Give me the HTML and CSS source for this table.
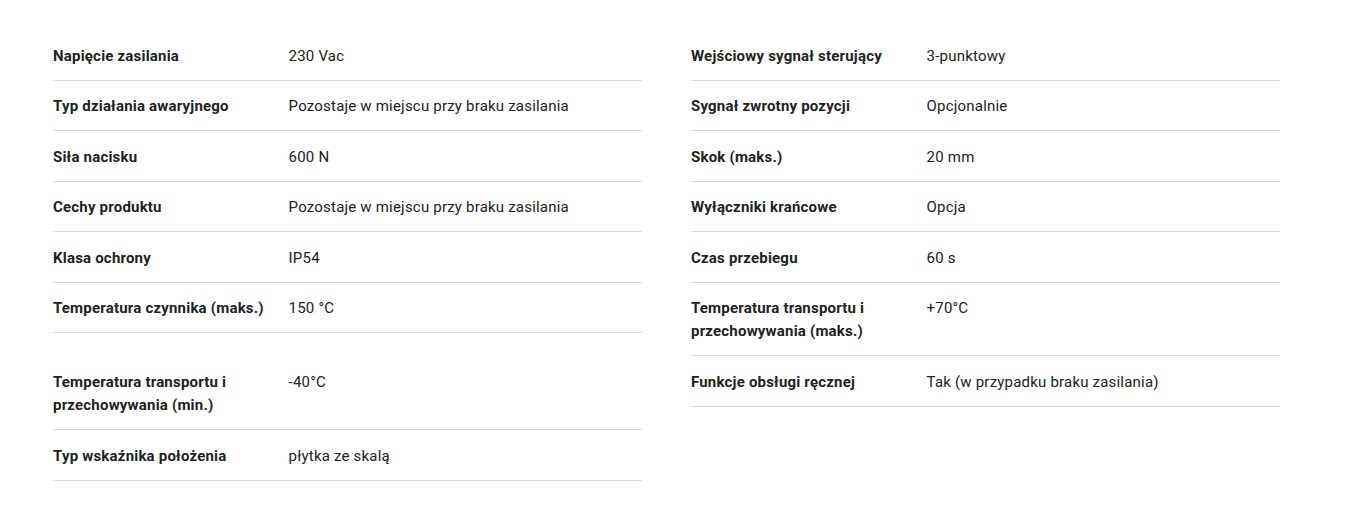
FILE: index.html
```html
<!DOCTYPE html>
<html lang="pl">
<head>
<meta charset="utf-8">
<link rel="stylesheet" href="styles.css">
</head>
<body>
<div class="specs">
  <div class="col">
    <div class="row"><div class="label">Napięcie zasilania</div><div class="value">230 Vac</div></div>
    <div class="row"><div class="label">Typ działania awaryjnego</div><div class="value">Pozostaje w miejscu przy braku zasilania</div></div>
    <div class="row"><div class="label">Siła nacisku</div><div class="value">600 N</div></div>
    <div class="row"><div class="label">Cechy produktu</div><div class="value">Pozostaje w miejscu przy braku zasilania</div></div>
    <div class="row"><div class="label">Klasa ochrony</div><div class="value">IP54</div></div>
    <div class="row"><div class="label">Temperatura czynnika (maks.)</div><div class="value">150 °C</div></div>
    <div class="row row-offset"><div class="label">Temperatura transportu i przechowywania (min.)</div><div class="value">-40°C</div></div>
    <div class="row"><div class="label">Typ wskaźnika położenia</div><div class="value">płytka ze skalą</div></div>
  </div>
  <div class="col">
    <div class="row"><div class="label">Wejściowy sygnał sterujący</div><div class="value">3-punktowy</div></div>
    <div class="row"><div class="label">Sygnał zwrotny pozycji</div><div class="value">Opcjonalnie</div></div>
    <div class="row"><div class="label">Skok (maks.)</div><div class="value">20 mm</div></div>
    <div class="row"><div class="label">Wyłączniki krańcowe</div><div class="value">Opcja</div></div>
    <div class="row"><div class="label">Czas przebiegu</div><div class="value">60 s</div></div>
    <div class="row"><div class="label">Temperatura transportu i przechowywania (maks.)</div><div class="value">+70°C</div></div>
    <div class="row"><div class="label">Funkcje obsługi ręcznej</div><div class="value">Tak (w przypadku braku zasilania)</div></div>
  </div>
</div>
</body>
</html>
```
FILE: styles.css
```css
html, body {
  margin: 0;
  padding: 0;
  background: #fff;
}
body {
  font-family: Roboto, "Liberation Sans", Arial, sans-serif;
  font-size: 15px;
  line-height: 23px;
  letter-spacing: 0.2px;
  color: #222;
}
.specs {
  display: flex;
  align-items: flex-start;
  gap: 49px;
  padding: 30px 0 0 53px;
}
.col {
  width: 589px;
  display: flex;
  flex-direction: column;
}
.row {
  display: flex;
  padding: 14.5px 0 12px;
  border-bottom: 1px solid #dcdcdc;
}
.row-offset {
  padding-top: 38px;
}
.label {
  width: 40%;
  flex: none;
  font-weight: 700;
  padding-right: 16px;
  box-sizing: border-box;
}
.value {
  flex: 1;
}
```
